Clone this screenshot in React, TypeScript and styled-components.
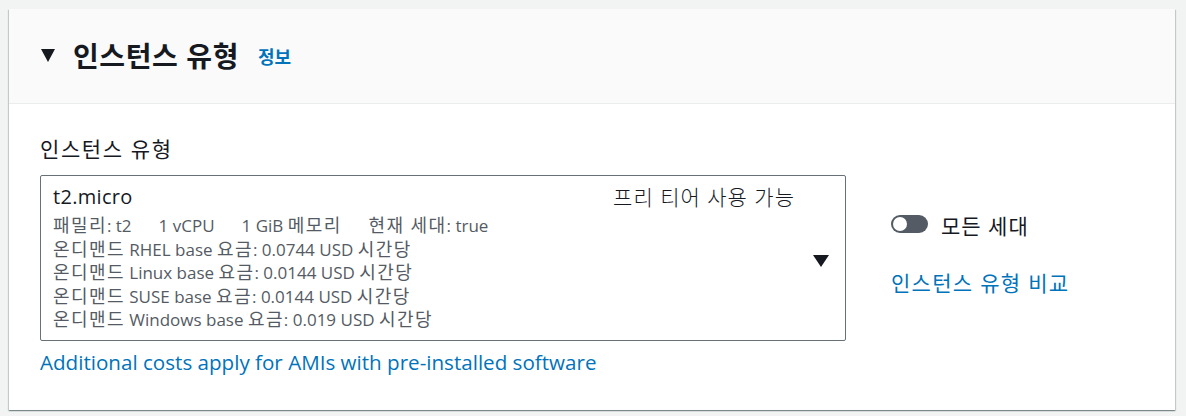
import React from "react";
import styled, { createGlobalStyle } from "styled-components";

const Global = createGlobalStyle`
  html, body { margin: 0; padding: 0; background: #f2f3f3; }
  body {
    font-family: "Open Sans", "Noto Sans CJK KR", sans-serif;
    color: #16191f;
  }
`;

const Page = styled.div`
  padding: 9px 11px 6px 9px;
`;

const Card = styled.section`
  background: #fff;
  box-shadow: 0 1px 1px 0 rgba(0, 28, 36, 0.3), 1px 1px 1px 0 rgba(0, 28, 36, 0.15),
    -1px 1px 1px 0 rgba(0, 28, 36, 0.15);
  height: 401px;
  display: flex;
  flex-direction: column;
`;

const Header = styled.header`
  background: #fafafa;
  border-bottom: 1px solid #eaeded;
  height: 95px;
  box-sizing: border-box;
  display: flex;
  align-items: center;
  padding-left: 32px;
  padding-bottom: 1px;
`;

const Caret = styled.span<{ $w: number; $h: number }>`
  display: inline-block;
  width: 0;
  height: 0;
  border-left: ${(p) => p.$w / 2}px solid transparent;
  border-right: ${(p) => p.$w / 2}px solid transparent;
  border-top: ${(p) => p.$h}px solid #16191f;
`;

const Title = styled.h2`
  margin: 0 0 0 18px;
  font-size: 28px;
  letter-spacing: 0.6px;
  font-weight: 700;
  line-height: 34px;
  color: #16191f;
`;

const InfoLink = styled.a`
  margin-left: 19px;
  font-size: 18px;
  font-weight: 700;
  color: #0073bb;
  text-decoration: none;
`;

const Body = styled.div`
  display: flex;
  padding: 32px 0 0 31px;
  gap: 45px;
`;

const LeftCol = styled.div`
  width: 806px;
  display: flex;
  flex-direction: column;
`;

const Label = styled.div`
  font-size: 21px;
  letter-spacing: 1.6px;
  line-height: 26px;
  margin-bottom: 13px;
`;

const Select = styled.div`
  border: 1px solid #687078;
  border-radius: 2px;
  height: 166px;
  box-sizing: border-box;
  display: flex;
  padding: 6px 16px 0 12px;
`;

const Option = styled.div`
  flex: 1;
  display: flex;
  flex-direction: column;
`;

const OptionTop = styled.div`
  display: flex;
  justify-content: space-between;
  padding-right: 18px;
  margin-bottom: 2px;
`;

const OptionName = styled.div`
  font-size: 20px;
  letter-spacing: 0.3px;
  line-height: 30px;
`;

const Tag = styled.div`
  font-size: 21px;
  font-weight: 300;
  letter-spacing: 1px;
  line-height: 30px;
`;

const DetailLine = styled.div`
  font-size: 17px;
  line-height: 23.5px;
  color: #545b64;
  white-space: nowrap;
  display: flex;
  gap: 27px;
`;

const Ko = styled.span`
  font-size: 18px;
  letter-spacing: 1.4px;
`;

const CaretWrap = styled.div`
  display: flex;
  align-items: center;
`;

const Footer = styled.a`
  margin-top: 8px;
  font-size: 20.6px;
  line-height: 26px;
  color: #0073bb;
  text-decoration: none;
`;

const RightCol = styled.div`
  display: flex;
  flex-direction: column;
  padding-top: 72px;
`;

const ToggleRow = styled.label`
  display: flex;
  align-items: center;
  gap: 13px;
  font-size: 21px;
  letter-spacing: 1px;
  line-height: 26px;
`;

const ToggleText = styled.span`
  padding-top: 5px;
`;

const Track = styled.span`
  width: 37px;
  height: 18px;
  border-radius: 9px;
  background: #545b64;
  position: relative;
  display: inline-block;
`;

const Knob = styled.span`
  position: absolute;
  left: 2px;
  top: 2px;
  width: 14px;
  height: 14px;
  border-radius: 50%;
  background: #fff;
`;

const CompareLink = styled.a`
  margin-top: 31px;
  font-size: 21px;
  letter-spacing: 1.3px;
  line-height: 26px;
  color: #0073bb;
  text-decoration: none;
`;

const rates: [string, string][] = [
  ["RHEL", "0.0744"],
  ["Linux", "0.0144"],
  ["SUSE", "0.0144"],
  ["Windows", "0.019"],
];

export default function App() {
  return (
    <>
      <Global />
      <Page>
        <Card>
          <Header>
            <Caret $w={15} $h={13} />
            <Title>인스턴스 유형</Title>
            <InfoLink href="#">정보</InfoLink>
          </Header>
          <Body>
            <LeftCol>
              <Label>인스턴스 유형</Label>
              <Select>
                <Option>
                  <OptionTop>
                    <OptionName>t2.micro</OptionName>
                    <Tag>프리 티어 사용 가능</Tag>
                  </OptionTop>
                  <DetailLine>
                    <span>
                      <Ko>패밀리</Ko>: t2
                    </span>
                    <span>1 vCPU</span>
                    <span>
                      1 GiB <Ko>메모리</Ko>
                    </span>
                    <span>
                      <Ko>현재 세대</Ko>: true
                    </span>
                  </DetailLine>
                  {rates.map(([os, price]) => (
                    <DetailLine key={os}>
                      <span>
                        <Ko>온디맨드</Ko> {os} base <Ko>요금</Ko>: {price} USD <Ko>시간당</Ko>
                      </span>
                    </DetailLine>
                  ))}
                </Option>
                <CaretWrap>
                  <Caret $w={16} $h={12} />
                </CaretWrap>
              </Select>
              <Footer href="#">Additional costs apply for AMIs with pre-installed software</Footer>
            </LeftCol>
            <RightCol>
              <ToggleRow>
                <Track>
                  <Knob />
                </Track>
                <ToggleText>모든 세대</ToggleText>
              </ToggleRow>
              <CompareLink href="#">인스턴스 유형 비교</CompareLink>
            </RightCol>
          </Body>
        </Card>
      </Page>
    </>
  );
}
